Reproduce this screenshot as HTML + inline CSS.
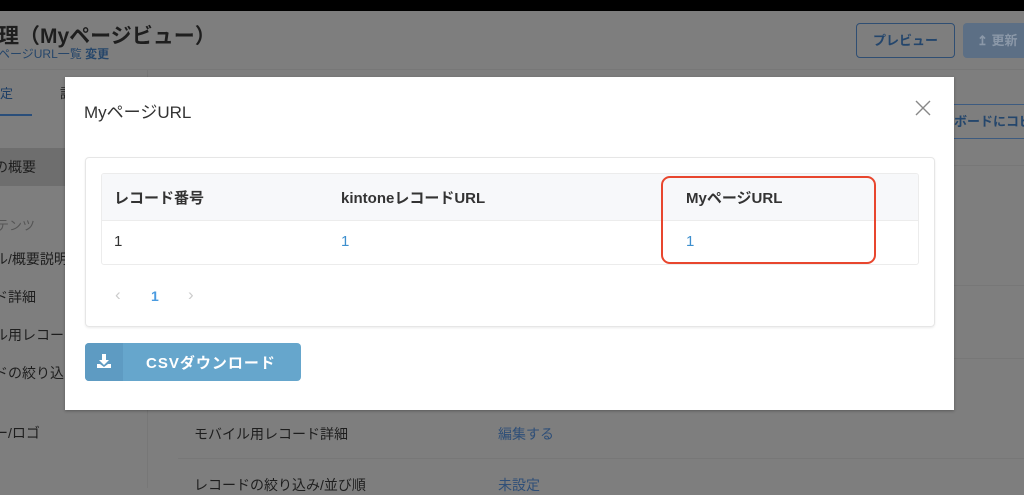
<!DOCTYPE html>
<html><head><meta charset="utf-8"><style>
*{margin:0;padding:0;box-sizing:border-box}
body{width:1024px;height:488px;overflow:hidden;background:#7e7e7e;font-family:"Liberation Sans","Noto Sans CJK JP",sans-serif;position:relative}
.a{position:absolute;white-space:nowrap}
</style></head><body>
<div class="a" style="left:0;top:0;width:1024px;height:11px;background:#000"></div>
<div class="a" style="left:0;top:69px;width:1024px;height:1px;background:#777"></div>
<div class="a" style="left:-2px;top:20px;font-size:21px;font-weight:bold;color:#1e1e1e">理（Myページビュー）</div>
<div class="a" style="left:-2px;top:45px;font-size:12px;color:#26466a">ページURL一覧 <b>変更</b></div>
<div class="a" style="left:856px;top:23px;width:99px;height:35px;border:1px solid #2f4e73;border-radius:4px;font-size:13px;font-weight:bold;color:#24466c;text-align:center;line-height:33px">プレビュー</div>
<div class="a" style="left:963px;top:23px;width:70px;height:35px;background:#5c6f85;border-radius:4px;font-size:13px;font-weight:bold;color:#8b98a8;line-height:35px;padding-left:14px">↥ 更新</div>
<div class="a" style="left:147px;top:70px;width:1px;height:418px;background:#777"></div>
<div class="a" style="left:0;top:83px;font-size:13px;color:#1f3f66">定</div>
<div class="a" style="left:0;top:114px;width:32px;height:2px;background:#2a4e7a"></div>
<div class="a" style="left:60px;top:83px;font-size:13px;color:#222">設</div>
<div class="a" style="left:0;top:148px;width:148px;height:38px;background:#6e6e6e"></div>
<div class="a" style="left:-6px;top:157px;font-size:14px;color:#1e1e1e">の概要</div>
<div class="a" style="left:-4px;top:215px;font-size:13px;color:#555">テンツ</div>
<div class="a" style="left:-6px;top:249px;font-size:14px;color:#1e1e1e">ル/概要説明</div>
<div class="a" style="left:-6px;top:287px;font-size:14px;color:#1e1e1e">ド詳細</div>
<div class="a" style="left:-6px;top:325px;font-size:14px;color:#1e1e1e">ル用レコード</div>
<div class="a" style="left:-6px;top:363px;font-size:14px;color:#1e1e1e">ドの絞り込み</div>
<div class="a" style="left:-6px;top:423px;font-size:14px;color:#1e1e1e">ー/ロゴ</div>
<div class="a" style="left:940px;top:104px;width:90px;height:35px;border-top:1px solid #3d5b80;border-bottom:1px solid #3d5b80;font-size:13px;font-weight:bold;color:#24466c;line-height:33px;padding-left:14px">ボードにコピ</div>
<div class="a" style="left:954px;top:165px;width:70px;height:1px;background:#777"></div>
<div class="a" style="left:954px;top:285px;width:70px;height:1px;background:#777"></div>
<div class="a" style="left:954px;top:358px;width:70px;height:1px;background:#777"></div>
<div class="a" style="left:178px;top:458px;width:846px;height:1px;background:#777"></div>
<div class="a" style="left:194px;top:424px;font-size:14px;color:#1e1e1e">モバイル用レコード詳細</div>
<div class="a" style="left:498px;top:424px;font-size:14px;color:#2f4f78">編集する</div>
<div class="a" style="left:194px;top:475px;font-size:14px;color:#1e1e1e">レコードの絞り込み/並び順</div>
<div class="a" style="left:498px;top:475px;font-size:14px;color:#2f4f78">未設定</div>

<div class="a" style="left:65px;top:77px;width:889px;height:333px;background:#fff;box-shadow:0 1px 3px rgba(0,0,0,.3)">
 <div class="a" style="left:19px;top:21px;font-size:17px;color:#333">MyページURL</div>
 <svg class="a" style="left:850px;top:23px" width="16" height="16" viewBox="0 0 16 16"><path d="M1 1L15 15M15 1L1 15" stroke="#888" stroke-width="1.4"/></svg>
 <div class="a" style="left:20px;top:80px;width:850px;height:170px;border:1px solid #e6e6e6;border-radius:4px;box-shadow:0 1px 2px rgba(0,0,0,.08)"></div>
 <div class="a" style="left:36px;top:96px;width:818px;height:92px;border:1px solid #ececec;border-radius:3px;overflow:hidden">
  <div class="a" style="left:0;top:0;width:818px;height:47px;background:#f7f8fa;border-bottom:1px solid #ececec"></div>
  <div class="a" style="left:12px;top:13px;font-size:15px;font-weight:bold;color:#333">レコード番号</div>
  <div class="a" style="left:239px;top:13px;font-size:15px;font-weight:bold;color:#333">kintoneレコードURL</div>
  <div class="a" style="left:584px;top:13px;font-size:15px;font-weight:bold;color:#333">MyページURL</div>
  <div class="a" style="left:12px;top:59px;font-size:15px;color:#333">1</div>
  <div class="a" style="left:239px;top:59px;font-size:15px;color:#3d8fce">1</div>
  <div class="a" style="left:584px;top:59px;font-size:15px;color:#3d8fce">1</div>
 </div>
 <div class="a" style="left:596px;top:99px;width:215px;height:88px;border:2px solid #e8462e;border-radius:9px"></div>
 <div class="a" style="left:50px;top:208px;font-size:17px;color:#ccc">‹</div>
 <div class="a" style="left:86px;top:211px;font-size:14px;font-weight:bold;color:#4a9be0">1</div>
 <div class="a" style="left:123px;top:208px;font-size:17px;color:#ccc">›</div>
 <div class="a" style="left:20px;top:266px;width:216px;height:38px;background:#66a6cc;border-radius:4px;overflow:hidden">
  <div class="a" style="left:0;top:0;width:38px;height:38px;background:#5e9bc2"></div>
  <svg class="a" style="left:11px;top:10px" width="16" height="16" viewBox="0 0 16 16"><path d="M6 1h4v6h3l-5 5-5-5h3z" fill="#fff"/><path d="M1 11h3l4 3 4-3h3v4H1z" fill="#fff"/></svg>
  <div class="a" style="left:61px;top:9px;font-size:15px;font-weight:bold;color:#fff;letter-spacing:1px">CSVダウンロード</div>
 </div>
</div>
</body></html>
